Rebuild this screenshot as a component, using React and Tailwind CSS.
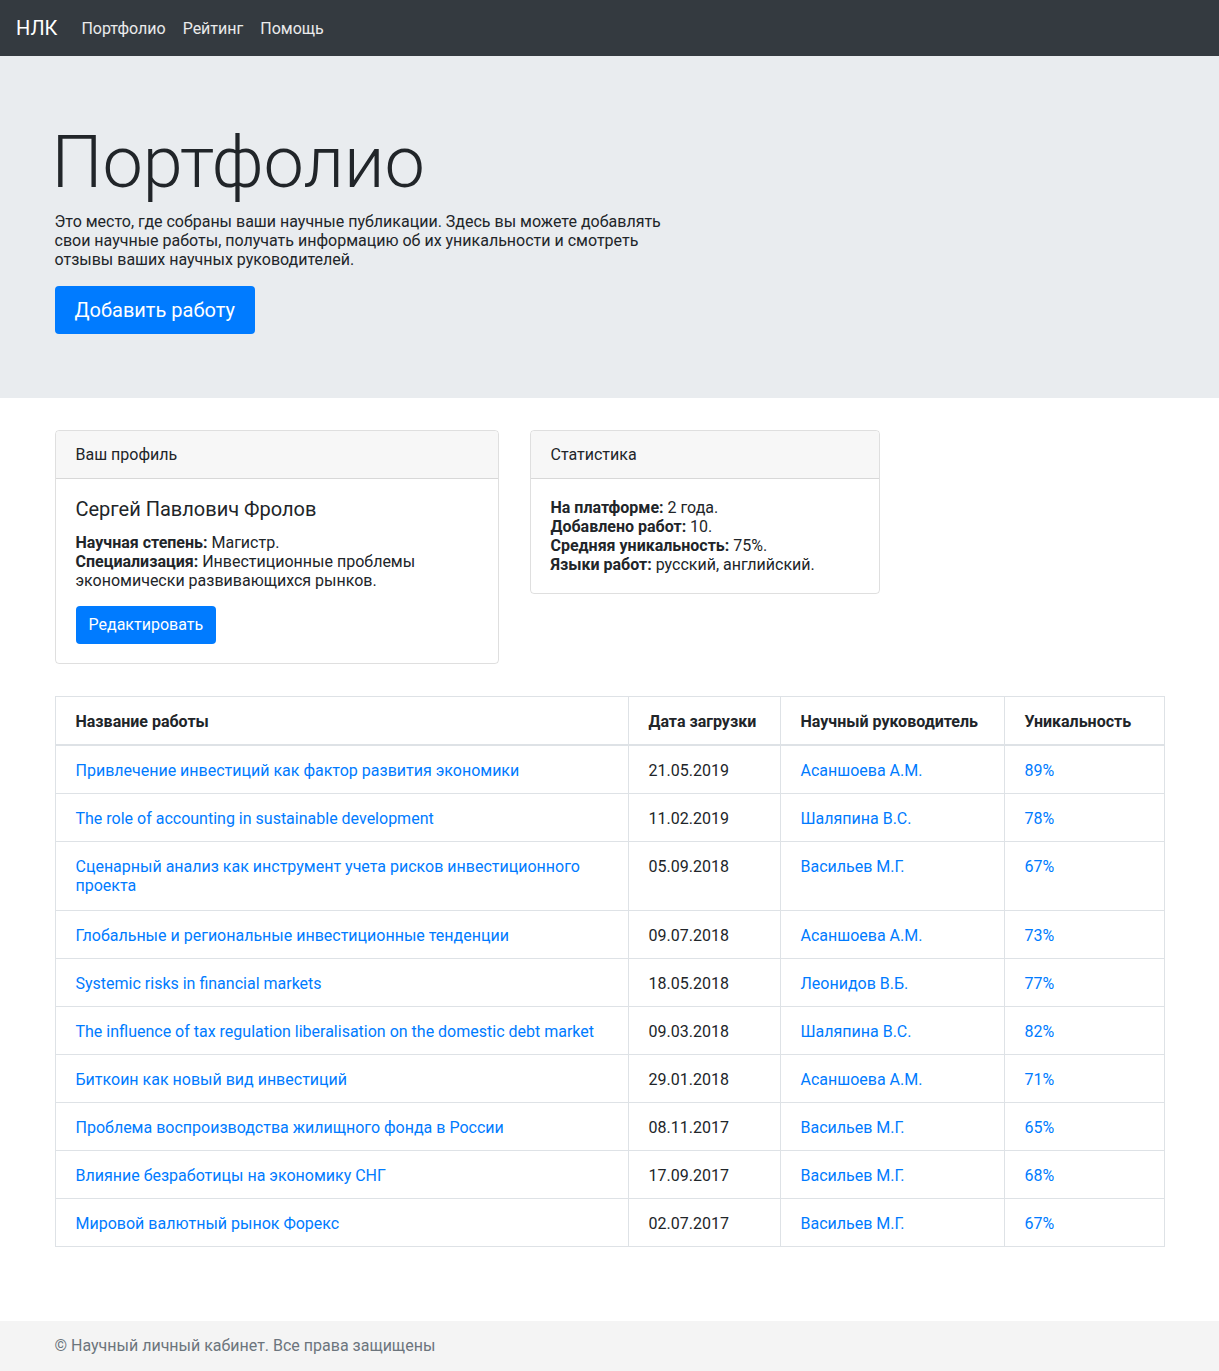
const WORKS = [
  { title: 'Привлечение инвестиций как фактор развития экономики', date: '21.05.2019', tutor: 'Асаншоева А.М.', score: '89%' },
  { title: 'The role of accounting in sustainable development', date: '11.02.2019', tutor: 'Шаляпина В.С.', score: '78%' },
  { title: 'Сценарный анализ как инструмент учета рисков инвестиционного проекта', date: '05.09.2018', tutor: 'Васильев М.Г.', score: '67%', tall: true },
  { title: 'Глобальные и региональные инвестиционные тенденции', date: '09.07.2018', tutor: 'Асаншоева А.М.', score: '73%' },
  { title: 'Systemic risks in financial markets', date: '18.05.2018', tutor: 'Леонидов В.Б.', score: '77%' },
  { title: 'The influence of tax regulation liberalisation on the domestic debt market', date: '09.03.2018', tutor: 'Шаляпина В.С.', score: '82%' },
  { title: 'Биткоин как новый вид инвестиций', date: '29.01.2018', tutor: 'Асаншоева А.М.', score: '71%' },
  { title: 'Проблема воспроизводства жилищного фонда в России', date: '08.11.2017', tutor: 'Васильев М.Г.', score: '65%' },
  { title: 'Влияние безработицы на экономику СНГ', date: '17.09.2017', tutor: 'Васильев М.Г.', score: '68%' },
  { title: 'Мировой валютный рынок Форекс', date: '02.07.2017', tutor: 'Васильев М.Г.', score: '67%' },
];

const cell = 'border border-[#dee2e6] px-5 pt-[15px] align-top';

export default function App() {
  return (
    <div className="min-h-[1371px] flex flex-col bg-white text-[#212529] text-[16px] leading-[19px] font-['Roboto',_'Liberation_Sans',_sans-serif]">
      {/* Navbar */}
      <nav className="h-14 bg-[#343a40] flex items-center px-4">
        <a href="#" className="text-white text-[20px] leading-[30px] mr-[24px]">НЛК</a>
        <div className="flex gap-[17px]">
          <a href="#" className="text-white/90">Портфолио</a>
          <a href="#" className="text-white/90">Рейтинг</a>
          <a href="#" className="text-white/90">Помощь</a>
        </div>
      </nav>

      {/* Jumbotron */}
      <section className="bg-[#e9ecef] py-16">
        <div className="w-[1110px] mx-auto">
          <h1 className="text-[72px] leading-[86px] font-light text-[#212529] -ml-[3px] mb-[6px]">Портфолио</h1>
          <p className="w-[620px] mb-[17px]">
            Это место, где собраны ваши научные публикации. Здесь вы можете добавлять свои научные работы,
            получать информацию об их уникальности и смотреть отзывы ваших научных руководителей.
          </p>
          <button className="bg-[#007bff] text-white text-[20px] leading-[24px] px-5 py-3 rounded-[4px]">
            Добавить работу
          </button>
        </div>
      </section>

      <main className="w-[1110px] mx-auto pt-[32px] flex-1">
        {/* Cards */}
        <div className="flex items-start gap-[31px]">
          <div className="w-[444px] border border-black/[.125] rounded-[4px]">
            <div className="bg-[#f7f7f7] border-b border-black/[.125] px-5 pt-3 pb-[11px] leading-[24px] rounded-t-[4px]">Ваш профиль</div>
            <div className="px-5 pt-[18px] pb-[19px]">
              <h5 className="text-[20px] leading-[24px] mb-[12px]">Сергей Павлович Фролов</h5>
              <p>
                <b>Научная степень:</b> Магистр.<br />
                <b>Специализация:</b> Инвестиционные проблемы<br />
                экономически развивающихся рынков.
              </p>
              <button className="mt-4 bg-[#007bff] text-white px-[13px] py-[9px] leading-[20px] rounded-[4px]">Редактировать</button>
            </div>
          </div>

          <div className="w-[350px] border border-black/[.125] rounded-[4px]">
            <div className="bg-[#f7f7f7] border-b border-black/[.125] px-5 pt-3 pb-[11px] leading-[24px] rounded-t-[4px]">Статистика</div>
            <div className="px-5 pt-[19px] pb-[19px]">
              <p>
                <b>На платформе:</b> 2 года.<br />
                <b>Добавлено работ:</b> 10.<br />
                <b>Средняя уникальность:</b> 75%.<br />
                <b>Языки работ:</b> русский, английский.
              </p>
            </div>
          </div>
        </div>

        {/* Table */}
        <table className="w-full mt-[32px] border-collapse mb-[74px]">
          <thead>
            <tr className="text-left">
              <th className={`${cell} pb-[13px] w-[573px] border-b-2 font-bold`}>Название работы</th>
              <th className={`${cell} pb-[13px] w-[152px] border-b-2 font-bold`}>Дата загрузки</th>
              <th className={`${cell} pb-[13px] w-[224px] border-b-2 font-bold`}>Научный руководитель</th>
              <th className={`${cell} pb-[13px] border-b-2 font-bold`}>Уникальность</th>
            </tr>
          </thead>
          <tbody>
            {WORKS.map((w) => {
              const td = `${cell} ${w.tall ? 'pb-[15px]' : 'pb-[13px]'}`;
              return (
                <tr key={w.title}>
                  <td className={td}><a href="#" className="text-[#007bff]">{w.title}</a></td>
                  <td className={td}>{w.date}</td>
                  <td className={td}><a href="#" className="text-[#007bff]">{w.tutor}</a></td>
                  <td className={td}><a href="#" className="text-[#007bff]">{w.score}</a></td>
                </tr>
              );
            })}
          </tbody>
        </table>
      </main>

      {/* Footer */}
      <footer className="bg-[#f4f4f4] py-[15px]">
        <div className="w-[1110px] mx-auto text-[#6c757d] leading-[20px]">© Научный личный кабинет. Все права защищены</div>
      </footer>
    </div>
  );
}
